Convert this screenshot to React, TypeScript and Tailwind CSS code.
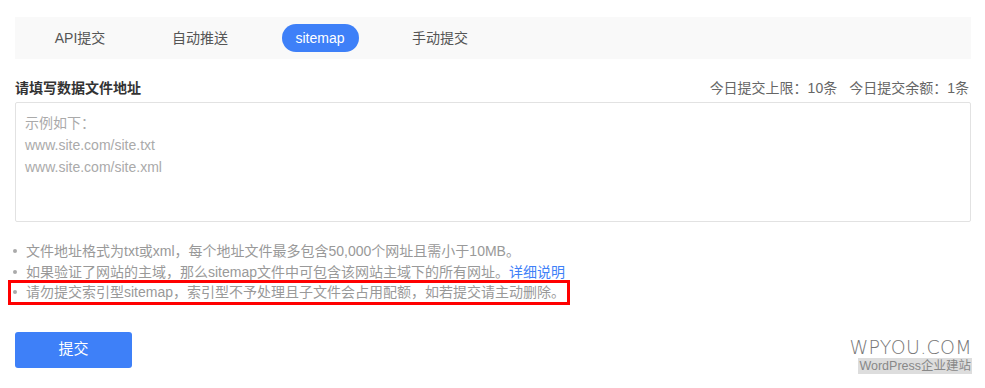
import React, { useState } from 'react';

const tabs = ['API提交', '自动推送', 'sitemap', '手动提交'];

const App = () => {
  const [active, setActive] = useState('sitemap');
  const [urls, setUrls] = useState('');

  return (
    <div
      className="relative w-[985px] h-[388px] bg-white px-[15px] pt-[17px] text-[#666]"
      style={{ fontFamily: '"Liberation Sans", "Noto Sans CJK SC", sans-serif' }}
    >
      {/* tab bar */}
      <div className="h-[42px] w-[956px] bg-[#f9f9f9] flex items-center pl-[5px]">
        {tabs.map((tab) => (
          <div key={tab} className="w-[120px] flex justify-center">
            <button
              onClick={() => setActive(tab)}
              className={
                active === tab
                  ? 'h-[28px] w-[77px] rounded-full bg-[#3e80f8] text-white text-[14px]'
                  : 'h-[28px] px-2 text-[14px] text-[#555]'
              }
            >
              {tab}
            </button>
          </div>
        ))}
      </div>

      {/* label row */}
      <div className="mt-[19px] h-[20px] flex items-center justify-between">
        <span className="text-[14px] font-bold text-[#333]">请填写数据文件地址</span>
        <span className="text-[14px] text-[#666] pr-[1px]">
          今日提交上限：10条<span className="inline-block w-[12px]" />今日提交余额：1条
        </span>
      </div>

      <textarea
        value={urls}
        onChange={(e) => setUrls(e.target.value)}
        placeholder={'示例如下：\nwww.site.com/site.txt\nwww.site.com/site.xml'}
        className="mt-[4px] block w-[956px] h-[120px] resize-none border border-[#e2e2e2] rounded-[2px] pl-[9px] pt-[9px] text-[14px] leading-[22px] placeholder:text-[#aaa] outline-none"
      />

      {/* tips */}
      <ul className="mt-[19px] text-[14px] leading-[20.5px] text-[#999]">
        <li className="flex items-center">
          <span className="w-[4px] h-[4px] rounded-full bg-[#aaa] ml-[-2px] mr-[9px]" />
          文件地址格式为txt或xml，每个地址文件最多包含50,000个网址且需小于10MB。
        </li>
        <li className="flex items-center">
          <span className="w-[4px] h-[4px] rounded-full bg-[#aaa] ml-[-2px] mr-[9px]" />
          如果验证了网站的主域，那么sitemap文件中可包含该网站主域下的所有网址。
          <a href="#" className="text-[#3e80f8]">详细说明</a>
        </li>
        <li className="relative flex items-center w-fit">
          <span className="w-[4px] h-[4px] rounded-full bg-[#aaa] ml-[-2px] mr-[9px]" />
          请勿提交索引型sitemap，索引型不予处理且子文件会占用配额，如若提交请主动删除。
          <span className="absolute left-[-7px] right-[-5px] top-[-2px] bottom-[-2px] border-[3px] border-[#f00]" />
        </li>
      </ul>

      <button className="mt-[29px] h-[36px] w-[117px] rounded-[3px] bg-[#3e80f8] text-white text-[15px]">
        提交
      </button>

      {/* watermark */}
      <div className="absolute right-[13px] top-[337px] flex flex-col items-end">
        <span
          className="text-[19px] leading-[20px] text-[#777] tracking-[0.3px] font-light"
          style={{ fontFamily: '"DejaVu Sans", sans-serif' }}
        >
          WPYOU.COM
        </span>
        <span className="mt-[1px] bg-[#ddd] px-[1px] text-[12.5px] leading-[16px] text-[#888]">
          WordPress企业建站
        </span>
      </div>
    </div>
  );
};

export default App;
